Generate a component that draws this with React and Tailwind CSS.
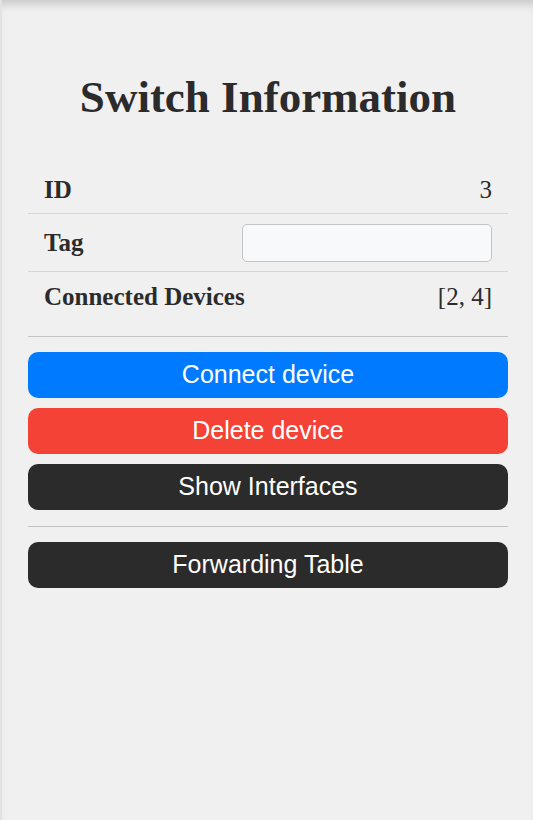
import { useState } from "react";

export default function App() {
  const [tag, setTag] = useState("");

  return (
    <div className="min-h-[820px] bg-[#f0f0f0] border-l-2 border-[#e2e2e2] shadow-[inset_0_10px_10px_-6px_rgba(0,0,0,0.18)] pl-[26px] pr-[25px] pt-[71px] font-['Liberation_Serif',serif] text-[#2b2b2b]">
      <h1 className="text-center text-[45px] font-bold leading-[52px]">Switch Information</h1>

      {/* details table */}
      <div className="mt-[44px] text-[25px]">
        <div className="flex items-center justify-between px-4 h-[47px] border-b border-[#d6d6d6]">
          <span className="font-bold">ID</span>
          <span>3</span>
        </div>
        <div className="flex items-center justify-between px-4 h-[58px] border-b border-[#d6d6d6]">
          <span className="font-bold">Tag</span>
          <input
            value={tag}
            onChange={(e) => setTag(e.target.value)}
            className="w-[250px] h-[38px] rounded-[5px] border border-[#c4c4c4] bg-[#f8f9fb] px-2 text-[16px] outline-none"
          />
        </div>
        <div className="flex items-center justify-between px-4 h-[50px]">
          <span className="font-bold">Connected Devices</span>
          <span>[2, 4]</span>
        </div>
      </div>

      <hr className="mt-[14px] border-t border-[#c4c4c4]" />

      <div className="mt-[15px] flex flex-col gap-[10px] font-['Liberation_Sans',Arial,sans-serif] text-[25px] text-white">
        <button className="h-[46px] rounded-[10px] bg-[#007bff]">Connect device</button>
        <button className="h-[46px] rounded-[10px] bg-[#f44336]">Delete device</button>
        <button className="h-[46px] rounded-[10px] bg-[#2b2b2b]">Show Interfaces</button>
      </div>

      <hr className="mt-[16px] border-t border-[#c4c4c4]" />

      <div className="mt-[15px] flex flex-col font-['Liberation_Sans',Arial,sans-serif] text-[25px] text-white">
        <button className="h-[46px] rounded-[10px] bg-[#2b2b2b]">Forwarding Table</button>
      </div>
    </div>
  );
}
